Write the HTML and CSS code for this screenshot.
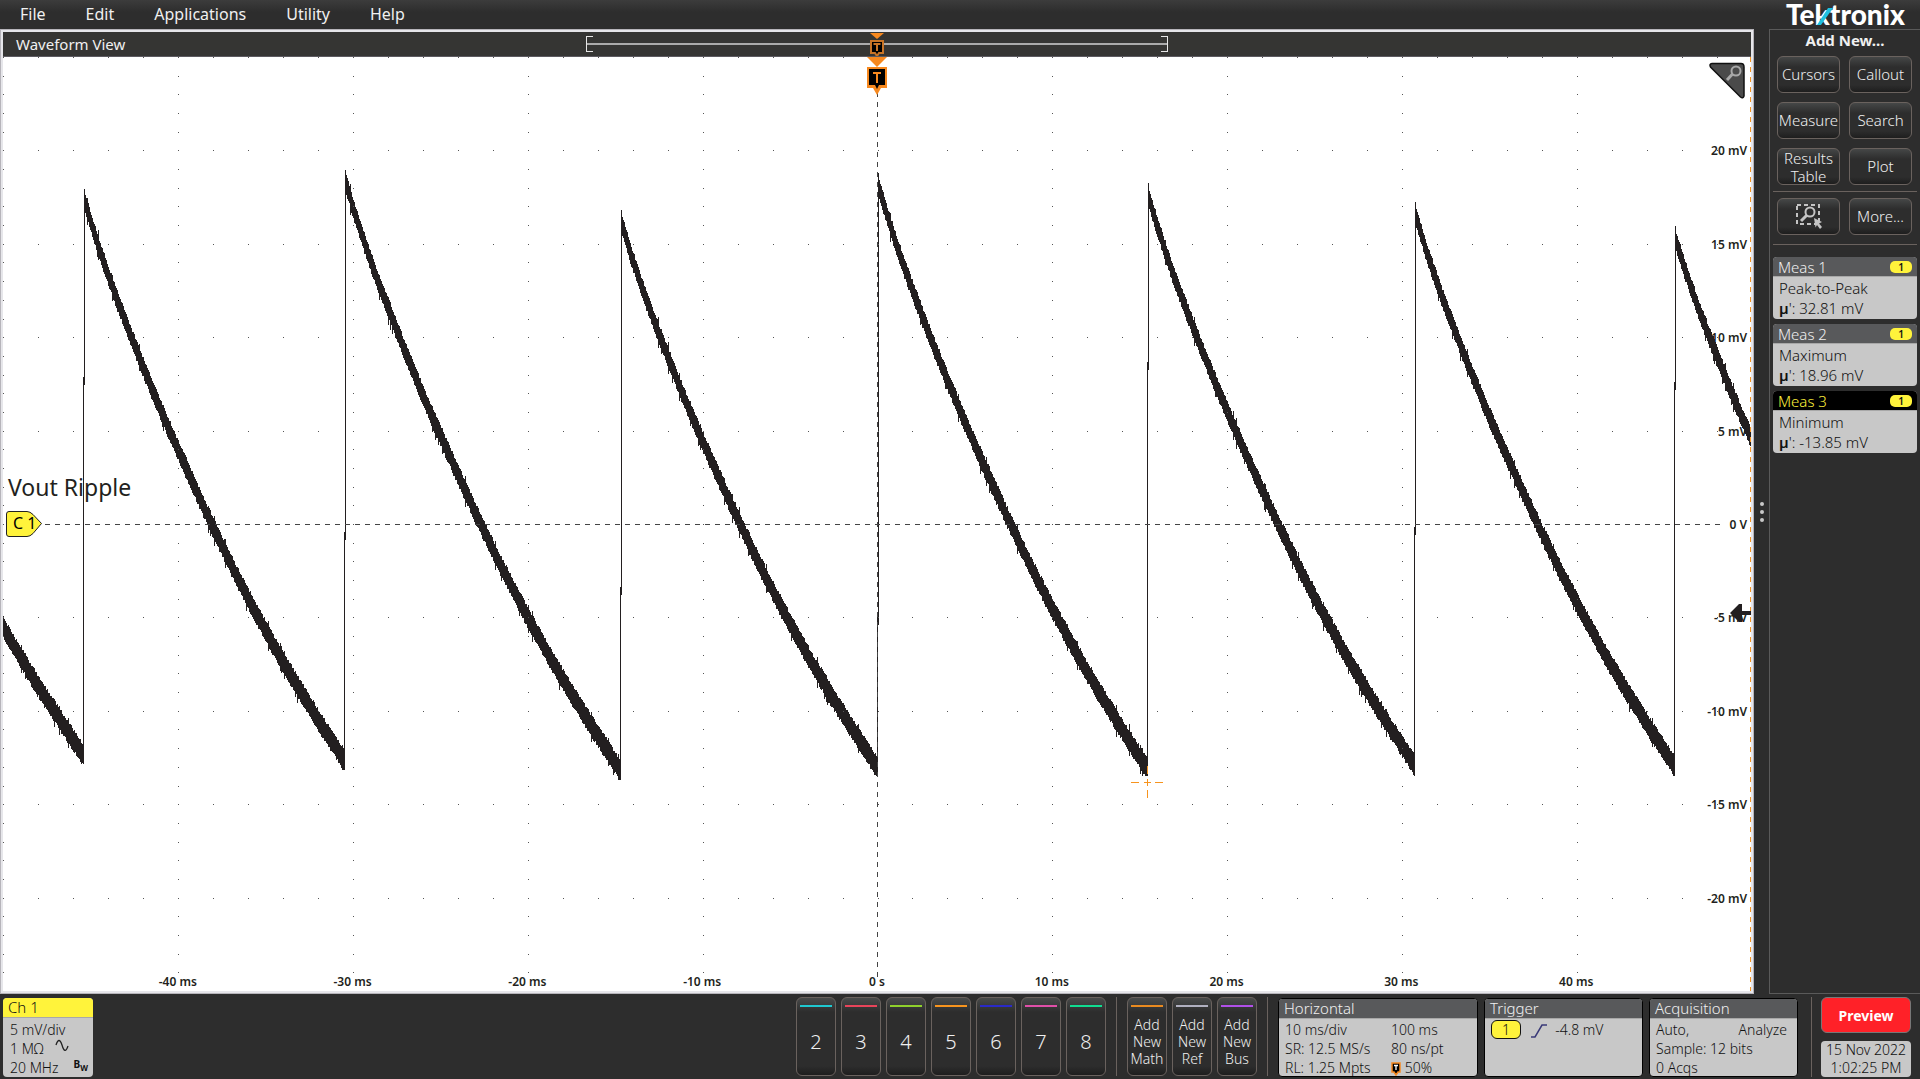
FILE: index.html
```html
<!DOCTYPE html>
<html lang="en">
<head>
    <meta charset="UTF-8">
    <meta name="viewport" content="width=device-width, initial-scale=1.0">
    <title>Waveform View</title>
    <link rel="stylesheet" href="styles.css">
</head>
<body>
    <!-- Menu Bar -->
    <header class="menu-bar">
        <nav class="menu">
            <button>File</button>
            <button>Edit</button>
            <button>Applications</button>
            <button>Utility</button>
            <button>Help</button>
        </nav>
        <svg class="logo" width="124" height="29" viewBox="0 0 124 29">
            <text x="2" y="25">Tektronix</text>
            <path d="M37 25 L49 8 H44 L33 25 Z" fill="#1fc0e0"/>
        </svg>
    </header>

    <main class="workspace">
        <!-- Waveform View -->
        <section class="view">
            <div class="view-header">
                <h1>Waveform View</h1>
                <div class="zoom-range">
                    <svg class="range-marker" width="16" height="24" viewBox="0 0 16 24">
                        <path d="M1 1 H15 L8 7 Z" fill="#f7891f"/>
                        <path d="M2 9 H14 V21 H10 L8 24 L6 21 H2 Z" fill="#000" stroke="#c87426" stroke-width="2"/>
                        <path d="M4.500 12 H11.500 M8 12 V19" stroke="#c87426" stroke-width="2"/>
                    </svg>
                </div>
            </div>
            <div class="plot" id="plot">
                <div id="labels"></div>
                <span class="wave-name">Vout Ripple</span>
                <svg class="trace" viewBox="0 0 1748 934" preserveAspectRatio="none">
                    <path id="wave" class="wave"/>
                    <path id="dots" class="dots"/>
                    <path class="axis" d="M42 467.500 H1718"/>
                    <path class="axis" d="M874.500 35 V925"/>
                    <path class="edge" d="M1747.500 0 V934"/>
                    <path class="cross" d="M1128 725.500 H1136 M1141 725.500 H1148 M1152 725.500 H1160 M1144.500 709 V717 M1144.500 722 V729 M1144.500 733 V741"/>
                </svg>
                <svg class="trigger-marker" width="20" height="38" viewBox="0 0 20 38">
                    <path d="M0 0 H20 L10 10 Z" fill="#f7891f"/>
                    <path d="M0 10 H20 V31 H14 L10 38 L6 31 H0 Z" fill="#f7891f"/>
                    <path d="M2 12 H18 V28 H12 L10 32 L8 28 H2 Z" fill="#000"/>
                    <path d="M6 16 H14 M10 16 V26" stroke="#f7891f" stroke-width="2"/>
                </svg>
                <svg class="ref-marker" width="38" height="28" viewBox="0 0 38 28">
                    <path d="M4 1.500 H22 Q25 1.500 28 4.500 L36.500 13.500 L28 23.500 Q25 26.500 22 26.500 H4 Q1.500 26.500 1.500 24 V4 Q1.500 1.500 4 1.500 Z" fill="#fff33b" stroke="#222"/>
                    <text x="8" y="19">C 1</text>
                </svg>
                <svg class="level-marker" width="21" height="20" viewBox="0 0 21 20">
                    <path d="M0 10 L9 1 H12 V8 H21 V12 H12 V19 H9 Z" fill="#231f20"/>
                </svg>
                <button class="zoom-corner" aria-label="Zoom">
                    <svg width="36" height="38" viewBox="0 0 36 38">
                        <path d="M3 1.500 H32 Q35 1.500 35 5 V34 Q34 37 31.500 35 L1.500 5 Q0 2 3 1.500 Z" fill="#4a4a4a" stroke="#111" stroke-width="1.500"/>
                        <circle cx="27" cy="9" r="4.500" fill="none" stroke="#a8a8a8" stroke-width="2"/>
                        <path d="M23.500 12 L18 18" stroke="#a8a8a8" stroke-width="3"/>
                    </svg>
                </button>
            </div>
        </section>

        <div class="grip"><i></i><i></i><i></i></div>

        <!-- Results Bar -->
        <aside class="sidebar">
            <h2>Add New...</h2>
            <div class="buttons">
                <button>Cursors</button>
                <button>Callout</button>
                <button>Measure</button>
                <button>Search</button>
                <button>Results Table</button>
                <button>Plot</button>
            </div>
            <div class="buttons more">
                <button aria-label="Zoom area">
                    <svg width="28" height="26" viewBox="0 0 28 26">
                        <path d="M2 2 H24 V21 H2 Z" fill="none" stroke="#c4c4c4" stroke-width="2" stroke-dasharray="4 3"/>
                        <circle cx="15" cy="9" r="4.500" fill="#2d2d2d" stroke="#c4c4c4" stroke-width="2"/>
                        <path d="M12 12 L6 18" stroke="#c4c4c4" stroke-width="3"/>
                        <path d="M19 15 L27 19 L24 20.500 L27 24 L25 26 L22 22 L20.500 24.500 Z" fill="#c4c4c4"/>
                    </svg>
                </button>
                <button>More...</button>
            </div>
            <div class="results">
                <div class="tile">
                    <h3>Meas 1 <span class="badge">1</span></h3>
                    <p>Peak-to-Peak</p>
                    <p><b>µ</b>': 32.81 mV</p>
                </div>
                <div class="tile">
                    <h3>Meas 2 <span class="badge">1</span></h3>
                    <p>Maximum</p>
                    <p><b>µ</b>': 18.96 mV</p>
                </div>
                <div class="tile selected">
                    <h3>Meas 3 <span class="badge">1</span></h3>
                    <p>Minimum</p>
                    <p><b>µ</b>': -13.85 mV</p>
                </div>
            </div>
        </aside>
    </main>

    <!-- Settings Bar -->
    <footer class="settings-bar">
        <div class="tile channel">
            <h3>Ch 1</h3>
            <p>5 mV/div</p>
            <p>1 MΩ
                <svg width="14" height="14" viewBox="0 0 14 14"><path d="M1 6 C3 0 5 0 7 6 C9 13 11 13 13 7" fill="none" stroke="#222" stroke-width="1.300"/></svg>
            </p>
            <p>20 MHz <span class="bw">B<sub>W</sub></span></p>
        </div>

        <div class="channels">
            <button class="c2">2</button>
            <button class="c3">3</button>
            <button class="c4">4</button>
            <button class="c5">5</button>
            <button class="c6">6</button>
            <button class="c7">7</button>
            <button class="c8">8</button>
        </div>
        <div class="channels add">
            <button class="math">Add New Math</button>
            <button class="ref">Add New Ref</button>
            <button class="bus">Add New Bus</button>
        </div>

        <div class="system">
            <div class="tile horizontal">
                <h3>Horizontal</h3>
                <div class="cols">
                    <p>10 ms/div</p><p>100 ms</p>
                    <p>SR: 12.5 MS/s</p><p>80 ns/pt</p>
                    <p>RL: 1.25 Mpts</p>
                    <p><svg width="10" height="14" viewBox="0 0 10 14"><path d="M1 1 H9 V10 H7 L5 13 L3 10 H1 Z" fill="#000" stroke="#f7891f" stroke-width="1.500"/><path d="M3 3.500 H7 M5 3.500 V8" stroke="#fff" stroke-width="1.300"/></svg> 50%</p>
                </div>
            </div>
            <div class="tile trigger">
                <h3>Trigger</h3>
                <p><span class="source">1</span>
                    <svg width="18" height="16" viewBox="0 0 18 16"><path d="M1 14 H5 L12 2 H17" fill="none" stroke="#3a3a78" stroke-width="1.500"/></svg>
                    -4.8 mV</p>
            </div>
            <div class="tile acquisition">
                <h3>Acquisition</h3>
                <p class="split"><span>Auto,</span><span>Analyze</span></p>
                <p>Sample: 12 bits</p>
                <p>0 Acqs</p>
            </div>
        </div>

        <div class="status">
            <button class="preview">Preview</button>
            <div class="clock">15 Nov 2022<br>1:02:25 PM</div>
        </div>
    </footer>

    <script src="script.js"></script>
</body>
</html>
```
FILE: styles.css
```css
* {
    box-sizing: border-box;
}

body {
    margin: 0;
    min-height: 100vh;
    display: flex;
    flex-direction: column;
    background: #2d2d2d;
    color: #f0f0f0;
    font-family: "Noto Sans", "Open Sans", sans-serif;
    font-size: 14px;
}

h1, h2, h3, p {
    margin: 0;
    font-weight: inherit;
}

button {
    font-family: inherit;
    color: inherit;
    padding: 0;
    cursor: pointer;
}

/* Menu bar */
.menu-bar {
    display: flex;
    justify-content: space-between;
    height: 29px;
    padding: 0 12px 0 20px;
    background: linear-gradient(#3c3c3c, #2d2d2d 12px);
}

.menu {
    display: flex;
    gap: 40px;
}

.menu button {
    background: none;
    border: none;
    font-size: 16px;
    line-height: 29px;
}

.logo {
    overflow: visible;
}

.logo text {
    font-family: Lato, sans-serif;
    font-size: 28px;
    font-weight: 900;
    fill: #fff;
}

/* Waveform view */
.workspace {
    flex: 1;
    display: flex;
}

.view {
    flex: 1;
    display: flex;
    flex-direction: column;
    border: 1px solid #b6b4ba;
    padding: 2px;
    background: #e6e6ea;
}

.view-header {
    display: grid;
    grid-template-columns: 1fr 582px 1fr;
    align-items: center;
    height: 25px;
    background: #353533;
    border-bottom: 1px solid #5c5a60;
}

.view-header h1 {
    padding-left: 13px;
    font-size: 15px;
    line-height: 24px;
}

.zoom-range {
    position: relative;
    height: 16px;
    border: 1px solid #e6e6e6;
    border-width: 0 1px;
    background:
        linear-gradient(#e6e6e6, #e6e6e6) 0 0 / 6px 1px no-repeat,
        linear-gradient(#e6e6e6, #e6e6e6) 0 100% / 6px 1px no-repeat,
        linear-gradient(#e6e6e6, #e6e6e6) 100% 0 / 6px 1px no-repeat,
        linear-gradient(#e6e6e6, #e6e6e6) 100% 100% / 6px 1px no-repeat,
        linear-gradient(#aaa, #aaa) 0 50% / 100% 2px no-repeat;
}

.range-marker {
    position: absolute;
    left: calc(50% - 8px);
    top: -4px;
}

.plot {
    position: relative;
    flex: 1;
    background: #fff;
    color: #231f20;
    overflow: hidden;
}

.trace {
    position: absolute;
    inset: 0;
    width: 100%;
    height: 100%;
    shape-rendering: crispEdges;
}

.trace path {
    fill: none;
}

.wave {
    stroke: #231f20;
}

.dots {
    stroke: #555;
}

.axis {
    stroke: #444;
    stroke-dasharray: 5 5;
}

.edge {
    stroke: #f7941e;
    stroke-dasharray: 5 5;
}

.cross {
    stroke: #f7941e;
}

.label {
    position: absolute;
    font-size: 12px;
    font-weight: 600;
    line-height: 18px;
    white-space: nowrap;
}

.label.volts {
    right: 4px;
    margin-top: -8px;
}

.label.time {
    bottom: 0;
    transform: translateX(-50%);
}

.wave-name {
    position: absolute;
    left: 5px;
    top: 45%;
    font-size: 23px;
    line-height: 24px;
    margin-top: -2px;
}

.trigger-marker {
    position: absolute;
    left: calc(50% - 10px);
    top: 0;
}

.ref-marker {
    position: absolute;
    left: 2px;
    top: calc(50% - 14px);
}

.ref-marker text {
    font-size: 16px;
}

.level-marker {
    position: absolute;
    right: 0;
    top: 58.5%;
}

.zoom-corner {
    position: absolute;
    top: 5px;
    right: 6px;
    height: 38px;
    background: none;
    border: none;
}

.grip {
    width: 15px;
    display: flex;
    flex-direction: column;
    align-items: center;
    justify-content: center;
    gap: 4px;
}

.grip i {
    width: 4px;
    height: 4px;
    border-radius: 50%;
    background: #c8c8c8;
}

/* Results bar */
.sidebar {
    width: 151px;
    border: 1px solid #5a5a5a;
    border-right: none;
    padding: 0 3px;
}

.sidebar h2 {
    height: 26px;
    font-size: 15px;
    font-weight: 700;
    line-height: 20px;
    text-align: center;
}

.buttons {
    display: grid;
    grid-template-columns: 1fr 1fr;
    gap: 9px;
    padding: 0 5px 6px 4px;
    border-bottom: 1px solid #6a625e;
}

.buttons.more {
    padding-top: 6px;
    padding-bottom: 9px;
}

.buttons button {
    height: 37px;
    border: 1px solid #6a625e;
    border-radius: 6px;
    background: linear-gradient(#454747, #2d2d2d 10px, #2d2d2d 28px, #1e1e1e);
    font-size: 15px;
    font-weight: 300;
    line-height: 18px;
    padding-bottom: 2px;
}

.buttons svg {
    vertical-align: middle;
}

.results {
    display: flex;
    flex-direction: column;
    gap: 5px;
    padding-top: 12px;
}

.tile {
    border-radius: 4px;
    overflow: hidden;
    background: #c8c8c8;
    color: #111;
    font-weight: 300;
    line-height: 20px;
}

.tile h3 {
    height: 20px;
    padding: 0 5px;
    background: #58595b;
    border-bottom: 1px solid #a8a8a8;
    color: #f0f0f0;
    font-size: 15px;
    line-height: 19px;
}

.tile p {
    padding-left: 6px;
}

.tile b {
    font-weight: 600;
}

.results .tile {
    height: 62px;
    font-size: 15px;
}

.results .tile h3 {
    display: flex;
    justify-content: space-between;
    align-items: center;
    margin-bottom: 1px;
    line-height: 18px;
}

.tile.selected h3 {
    background: #000;
    color: #fff33b;
}

.badge {
    width: 22px;
    height: 12px;
    border-radius: 5px;
    background: #fff33b;
    color: #111;
    font-size: 10px;
    font-weight: 600;
    line-height: 12px;
    text-align: center;
}

/* Settings bar */
.settings-bar {
    display: flex;
    align-items: flex-start;
    height: 85px;
    padding: 3px 9px 2px 3px;
}

.settings-bar .tile {
    height: 79px;
    margin-top: 1px;
    line-height: 19px;
}

.settings-bar .tile h3 {
    margin-bottom: 1px;
    line-height: 18px;
}

.channel {
    width: 90px;
    margin-right: auto;
}

.settings-bar .channel h3 {
    margin-bottom: 2px;
    background: #fff33b;
    color: #111;
}

.channel p {
    display: flex;
    justify-content: space-between;
    padding-left: 7px;
    padding-right: 24px;
}

.channel p:last-child {
    padding-right: 5px;
}

.bw {
    font-size: 10px;
    font-weight: 700;
    line-height: 12px;
}

.bw sub {
    font-size: 8px;
}

.channels {
    display: flex;
    gap: 5px;
    padding-right: 10px;
    border-right: 1px solid #6a625e;
}

.channels.add {
    padding-left: 10px;
}

.channels button {
    position: relative;
    width: 40px;
    height: 79px;
    border: 1px solid #6a625e;
    border-radius: 6px;
    background: linear-gradient(#484a4a, #2d2d2d 14px, #2d2d2d 68px, #1e1e1e);
    font-size: 20px;
    font-weight: 300;
    padding-top: 9px;
}

.channels button::before {
    content: "";
    position: absolute;
    left: 3px;
    right: 3px;
    top: 7px;
    height: 2px;
    background: var(--line);
}

.channels.add button {
    font-size: 14px;
    line-height: 17px;
}

.c2 { --line: #1fc8d0; }
.c3 { --line: #e8445a; }
.c4 { --line: #8fd02c; }
.c5 { --line: #f7941e; }
.c6 { --line: #2a2ac8; }
.c7 { --line: #e04fa8; }
.c8 { --line: #10dc90; }
.math { --line: #e88a20; }
.ref { --line: #b0b0c0; }
.bus { --line: #b050e8; }

.system {
    display: flex;
    gap: 6px;
    padding: 0 13px 0 10px;
    border-right: 1px solid #6a625e;
}

.system .tile {
    border: 1px solid #000;
}

.horizontal {
    width: 200px;
}

.trigger {
    width: 159px;
}

.acquisition {
    width: 149px;
}

.cols {
    display: grid;
    grid-template-columns: 106px 1fr;
}

.split {
    display: flex;
    justify-content: space-between;
    padding-right: 10px;
}

.source {
    display: inline-block;
    width: 30px;
    height: 19px;
    border: 1px solid #111;
    border-radius: 6px;
    background: #fff33b;
    line-height: 17px;
    text-align: center;
    margin-right: 5px;
}

.tile svg {
    vertical-align: middle;
}

.trigger svg {
    margin-right: 4px;
}

.status {
    display: flex;
    flex-direction: column;
    gap: 8px;
    width: 99px;
    padding-left: 9px;
}

.preview {
    height: 36px;
    border: 1px solid #777;
    border-radius: 6px;
    background: #ff2128;
    color: #fff;
    font-size: 14px;
    font-weight: 700;
}

.clock {
    height: 36px;
    border-radius: 4px;
    background: #c8c8c8;
    color: #111;
    font-weight: 300;
    line-height: 18px;
    text-align: center;
    white-space: nowrap;
}
```
FILE: script.js
```js
const WIDTH = 1748;
const DIV_X = 174.9;
const DIV_Y = 93.4;

// Discharge curve, normalized: [time, drop]
const curve = [
    [0, 0], [0.032, 0.05], [0.063, 0.095], [0.093, 0.136], [0.126, 0.178],
    [0.175, 0.238], [0.212, 0.282], [0.257, 0.334], [0.323, 0.407],
    [0.422, 0.51], [0.491, 0.58], [0.571, 0.657], [0.651, 0.729],
    [0.732, 0.798], [0.825, 0.872], [0.911, 0.936], [1, 1]
];

// One entry per ripple period: x range, y range, spike tip, lowest point, step in the edge
const periods = [
    { x1: -182, x2: 80, y1: 153, y2: 698, tip: 130, low: 707, step: 330 },
    { x1: 81, x2: 340, y1: 143, y2: 702, tip: 132, low: 713, step: 320 },
    { x1: 342, x2: 616, y1: 125, y2: 712, tip: 113, low: 723, step: 475 },
    { x1: 618, x2: 873, y1: 166, y2: 709, tip: 153, low: 719, step: 530 },
    { x1: 875, x2: 1144, y1: 129, y2: 712, tip: 116, low: 719, step: 560 },
    { x1: 1145, x2: 1411, y1: 140, y2: 708, tip: 126, low: 719, step: 305 },
    { x1: 1412, x2: 1671, y1: 158, y2: 709, tip: 145, low: 719, step: 470 },
    { x1: 1672, x2: 1930, y1: 182, y2: 713, tip: 169, low: 723, step: 325 }
];

// Repeatable noise
let seed = 7;
function noise() {
    seed = (seed * 16807) % 2147483647;
    return seed / 2147483647;
}

function curveAt(u) {
    for (let i = 1; i < curve.length; i++) {
        if (u <= curve[i][0]) {
            const [u0, v0] = curve[i - 1];
            const [u1, v1] = curve[i];
            return v0 + (v1 - v0) * (u - u0) / (u1 - u0);
        }
    }
    return 1;
}

function drawWave() {
    let d = '';
    periods.forEach((p, i) => {
        for (let x = Math.max(0, p.x1); x <= p.x2 && x < WIDTH; x++) {
            const u = (x - p.x1) / (p.x2 - p.x1);
            const y = p.y1 + (p.y2 - p.y1) * curveAt(u);
            const half = 8 + u;
            const spike = noise() > 0.93 ? 5 : 0;
            let top = y - half - noise() * 3 - spike * noise();
            let bottom = y + half + noise() * 3 + spike;
            if (x === p.x1) top = p.tip;
            bottom = Math.min(bottom, p.low);
            if (x === p.x2) bottom = p.low;
            d += `M${x + 0.5} ${Math.round(top)}V${Math.round(bottom)}`;
        }
        // Rising edge into this period
        if (i > 0) {
            const low = periods[i - 1].low;
            d += `M${p.x1 + 0.5} ${p.tip}V${p.step + 8}M${p.x1 - 0.5} ${p.step}V${low}`;
        }
    });
    document.getElementById('wave').setAttribute('d', d);
}

function drawDots() {
    let d = '';
    const dot = (x, y) => {
        d += `M${Math.round(x)} ${Math.round(y) + 0.5}h1`;
    };
    for (let c = 0; c < 10; c++) {
        if (c === 5) continue;
        for (let r = 0; r < 50; r++) dot(c * DIV_X, r * DIV_Y / 5);
    }
    for (let r = 0; r < 10; r++) {
        if (r === 5) continue;
        for (let c = 0; c < 50; c++) dot(c * DIV_X / 5, r * DIV_Y);
    }
    document.getElementById('dots').setAttribute('d', d);
}

function addLabel(text, type, side, percent) {
    const span = document.createElement('span');
    span.className = 'label ' + type;
    span.textContent = text;
    span.style[side] = percent + '%';
    document.getElementById('labels').appendChild(span);
}

function drawLabels() {
    for (let mv = 20; mv >= -20; mv -= 5) {
        addLabel(mv === 0 ? '0 V' : mv + ' mV', 'volts', 'top', 50 - mv * 2);
    }
    for (let ms = -40; ms <= 40; ms += 10) {
        addLabel(ms === 0 ? '0 s' : ms + ' ms', 'time', 'left', 50 + ms);
    }
}

drawWave();
drawDots();
drawLabels();
```
